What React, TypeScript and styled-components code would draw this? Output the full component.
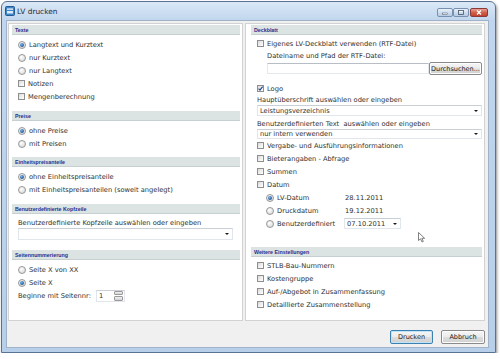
import React from "react";
import styled, { createGlobalStyle } from "styled-components";

const GlobalStyle = createGlobalStyle`
  html, body { margin: 0; padding: 0; background: #ffffff; }
  body { font-family: "DejaVu Sans", Verdana, sans-serif; color: #2f2f2f; }
`;

const Window = styled.div`
  box-sizing: border-box;
  width: 495px;
  height: 352px;
  margin: 1px 0 0 1px;
  display: flex;
  flex-direction: column;
  padding: 0 6px 4px 4px;
  border: 1px solid #5a7394;
  border-radius: 6px 6px 0 0;
  background: linear-gradient(180deg, #dae8f7 0px, #c1d6ee 18px, #b7cfe9 100%);
  box-shadow: 1px 2px 3px rgba(0, 0, 0, 0.45);
`;

const TitleBar = styled.div`
  height: 18px;
  margin: 0 -6px 0 -4px;
  padding: 0 7px 0 3px;
  display: flex;
  align-items: flex-start;
`;

const TitleIcon = styled.svg`
  width: 10px;
  height: 10px;
  margin-top: 4px;
`;

const TitleText = styled.span`
  margin: 4px 0 0 2px;
  font-family: "DejaVu Sans", sans-serif;
  font-size: 7.4px;
  line-height: 12px;
  color: #1e2b3c;
  flex: 1;
`;

const CaptionButtons = styled.div`
  display: flex;
  margin-top: 6px;
`;

const CaptionButton = styled.div<{ close?: boolean }>`
  box-sizing: border-box;
  width: ${(p) => (p.close ? 18 : 16)}px;
  height: 9px;
  margin-left: ${(p) => (p.close ? 1 : 0)}px;
  border: 1px solid ${(p) => (p.close ? "#8a3a3a" : "#7890b0")};
  border-radius: 2px;
  background: ${(p) =>
    p.close
      ? "linear-gradient(180deg, #e8a493 0%, #d0604c 50%, #c3412e 100%)"
      : "linear-gradient(180deg, #eaf1f9 0%, #cddcee 50%, #b8cbe3 100%)"};
  display: flex;
  align-items: center;
  justify-content: center;
`;

const Client = styled.div`
  flex: 1;
  box-sizing: border-box;
  display: flex;
  flex-direction: column;
  padding: 2px 3px 0 1px;
  background: #f0f0f0;
  border: 1px solid #9fb2c8;
`;

const PanelRow = styled.div`
  display: flex;
  gap: 2px;
  height: 298px;
`;

const Panel = styled.div<{ width?: number; inset: number }>`
  position: relative;
  box-sizing: border-box;
  ${(p) => (p.width ? `width: ${p.width}px;` : "flex: 1;")}
  display: flex;
  flex-direction: column;
  padding: 1px 2px 0 ${(p) => p.inset}px;
  background: #ffffff;
  border: 1px solid #d2d2d2;
`;

const Header = styled.div<{ gap?: number }>`
  box-sizing: border-box;
  height: 10px;
  margin-top: ${(p) => p.gap ?? 0}px;
  padding-left: 3px;
  background: #dce3e3;
  border-bottom: 1px solid #c7d0d0;
  font-family: "Liberation Sans", Arial, sans-serif;
  font-weight: bold;
  font-size: 5.3px;
  line-height: 10px;
  color: #1f2f8f;
  white-space: nowrap;
`;

const Rows = styled.div<{ gap?: number }>`
  display: flex;
  flex-direction: column;
  margin-top: ${(p) => p.gap ?? 3}px;
`;

const Row = styled.div<{ indent?: number; h?: number }>`
  display: flex;
  align-items: center;
  height: ${(p) => p.h ?? 13}px;
  padding-left: ${(p) => p.indent ?? 6}px;
  font-size: 6.7px;
  white-space: nowrap;
`;

const Label = styled.div<{ indent?: number; gap?: number; h?: number }>`
  height: ${(p) => p.h ?? 10}px;
  line-height: ${(p) => p.h ?? 10}px;
  margin-top: ${(p) => p.gap ?? 0}px;
  padding-left: ${(p) => p.indent ?? 6}px;
  font-size: 6.7px;
  white-space: nowrap;
`;

const RadioDot = styled.span<{ checked?: boolean }>`
  box-sizing: border-box;
  width: 8px;
  height: 8px;
  margin-right: 3px;
  border-radius: 50%;
  border: 1px solid #989898;
  background: radial-gradient(circle at 40% 35%, #ffffff 0%, #e6e6e6 55%, #cfcfcf 100%);
  display: flex;
  align-items: center;
  justify-content: center;
  flex-shrink: 0;

  &::after {
    content: "";
    display: ${(p) => (p.checked ? "block" : "none")};
    width: 4px;
    height: 4px;
    border-radius: 50%;
    background: radial-gradient(circle at 40% 35%, #7fb3e6 0%, #2d6cb0 55%, #1a3f73 100%);
  }
`;

const CheckBox = styled.span`
  box-sizing: border-box;
  width: 7px;
  height: 7px;
  margin-right: 3px;
  border: 1px solid #8f8f8f;
  background: linear-gradient(135deg, #d9d9d9 0%, #f2f2f2 60%, #ffffff 100%);
  flex-shrink: 0;
  position: relative;
`;

const Check = styled.svg`
  position: absolute;
  left: -1px;
  top: -1px;
  width: 7px;
  height: 7px;
`;

const Radio = ({ checked, children }: { checked?: boolean; children: React.ReactNode }) => (
  <>
    <RadioDot checked={checked} />
    {children}
  </>
);

const Checkbox = ({ checked, children }: { checked?: boolean; children: React.ReactNode }) => (
  <>
    <CheckBox>
      {checked && (
        <Check viewBox="0 0 7 7">
          <path d="M1.6 3.6 L3 5.1 L5.6 1.6" fill="none" stroke="#1d4688" strokeWidth="1.1" />
        </Check>
      )}
    </CheckBox>
    {children}
  </>
);

const Combo = styled.div<{ left?: number; right?: number; h?: number }>`
  box-sizing: border-box;
  height: ${(p) => p.h ?? 11}px;
  margin: 0 ${(p) => p.right ?? 0}px 0 ${(p) => p.left ?? 6}px;
  padding: 0 3px 0 2px;
  display: flex;
  align-items: center;
  justify-content: space-between;
  background: #ffffff;
  border: 1px solid #e1e6ec;
  border-top-color: #c9cfd6;
  font-size: 6.7px;
  white-space: nowrap;
`;

const Arrow = styled.span`
  width: 0;
  height: 0;
  border-left: 2px solid transparent;
  border-right: 2px solid transparent;
  border-top: 2.5px solid #1a1a1a;
`;

const InputRow = styled.div`
  display: flex;
  align-items: center;
  height: 13px;
  margin-top: 1px;
  padding-left: 16px;
`;

const TextInput = styled.div`
  box-sizing: border-box;
  width: 162px;
  height: 11px;
  background: #ffffff;
  border: 1px solid #e3e9ef;
  border-top-color: #b8bec6;
`;

const Button = styled.div<{ primary?: boolean; w: number; h: number }>`
  box-sizing: border-box;
  width: ${(p) => p.w}px;
  height: ${(p) => p.h}px;
  display: flex;
  align-items: center;
  justify-content: center;
  border: 1px solid ${(p) => (p.primary ? "#3c7fb1" : "#8a8a8a")};
  border-radius: 2px;
  background: linear-gradient(180deg, #f6f6f6 0%, #ebebeb 48%, #dddddd 52%, #d0d0d0 100%);
  box-shadow: ${(p) => (p.primary ? "inset 0 0 0 1px #bfe4f8" : "inset 0 0 0 1px #fcfcfc")};
  font-size: 6.5px;
  color: #1a1a1a;
  white-space: nowrap;
`;

const DateLabel = styled.span`
  display: flex;
  align-items: center;
  width: 79px;
`;

const DateCombo = styled.div`
  box-sizing: border-box;
  width: 57px;
  height: 11px;
  margin-left: -1px;
  padding: 0 3px 0 2px;
  display: flex;
  align-items: center;
  justify-content: space-between;
  background: #ffffff;
  border: 1px solid #e1e6ec;
  border-top-color: #c9cfd6;
`;

const Spinner = styled.div`
  box-sizing: border-box;
  width: 29px;
  height: 12px;
  margin-left: 5px;
  padding: 1px 1px 1px 2px;
  display: flex;
  align-items: center;
  justify-content: space-between;
  background: #ffffff;
  border: 1px solid #e1e6ec;
  border-top-color: #c9cfd6;
`;

const SpinButtons = styled.div`
  display: flex;
  flex-direction: column;
  gap: 1px;
`;

const SpinButton = styled.div`
  box-sizing: border-box;
  width: 9px;
  height: 4.5px;
  border: 1px solid #9a9a9a;
  border-radius: 1px;
  background: linear-gradient(180deg, #f1f1f1, #d2d2d2);
`;

const Footer = styled.div`
  display: flex;
  justify-content: flex-end;
  gap: 8px;
  padding-top: 9px;
`;

const Pointer = styled.svg`
  position: absolute;
  left: 172px;
  top: 208px;
  width: 8px;
  height: 11px;
`;

export default function App() {
  return (
    <>
      <GlobalStyle />
      <Window>
        <TitleBar>
          <TitleIcon viewBox="0 0 10 10">
            <rect x="0.5" y="0.5" width="9" height="9" rx="1" fill="#3f86c9" stroke="#245a93" />
            <rect x="2" y="2.5" width="6" height="1.2" fill="#ffffff" />
            <rect x="2" y="5" width="6" height="2.5" fill="#dcecfb" />
          </TitleIcon>
          <TitleText>LV drucken</TitleText>
          <CaptionButtons>
            <CaptionButton>
              <svg width="6" height="5" viewBox="0 0 6 5">
                <rect x="0.5" y="3" width="5" height="1.5" fill="#ffffff" stroke="#44556b" strokeWidth="0.5" />
              </svg>
            </CaptionButton>
            <CaptionButton>
              <svg width="6" height="5" viewBox="0 0 6 5">
                <rect x="0.5" y="0.5" width="5" height="4" fill="none" stroke="#44556b" strokeWidth="0.8" />
                <rect x="1.2" y="1.2" width="3.6" height="0.8" fill="#ffffff" />
              </svg>
            </CaptionButton>
            <CaptionButton close>
              <svg width="6" height="5" viewBox="0 0 6 5">
                <path d="M1 0.5 L5 4.5 M5 0.5 L1 4.5" stroke="#ffffff" strokeWidth="1.3" />
              </svg>
            </CaptionButton>
          </CaptionButtons>
        </TitleBar>

        <Client>
          <PanelRow>
            <Panel width={235} inset={3}>
              <Header>Texte</Header>
              <Rows>
                <Row><Radio checked>Langtext und Kurztext</Radio></Row>
                <Row><Radio>nur Kurztext</Radio></Row>
                <Row><Radio>nur Langtext</Radio></Row>
                <Row><Checkbox>Notizen</Checkbox></Row>
                <Row><Checkbox>Mengenberechnung</Checkbox></Row>
              </Rows>

              <Header gap={8}>Preise</Header>
              <Rows>
                <Row><Radio checked>ohne Preise</Radio></Row>
                <Row><Radio>mit Preisen</Radio></Row>
              </Rows>

              <Header gap={7}>Einheitspreisanteile</Header>
              <Rows>
                <Row><Radio checked>ohne Einheitspreisanteile</Radio></Row>
                <Row><Radio>mit Einheitspreisanteilen (soweit angelegt)</Radio></Row>
              </Rows>

              <Header gap={8}>Benutzerdefinierte Kopfzeile</Header>
              <Label gap={5} h={9}>Benutzerdefinierte Kopfzeile auswählen oder eingeben</Label>
              <Combo h={12} right={7}>
                <span />
                <Arrow />
              </Combo>

              <Header gap={10}>Seitennummerierung</Header>
              <Rows>
                <Row><Radio>Seite X von XX</Radio></Row>
                <Row><Radio checked>Seite X</Radio></Row>
                <Row>
                  Beginne mit Seitennr:
                  <Spinner>
                    <span>1</span>
                    <SpinButtons>
                      <SpinButton />
                      <SpinButton />
                    </SpinButtons>
                  </Spinner>
                </Row>
              </Rows>
            </Panel>

            <Panel inset={5}>
              <Header>Deckblatt</Header>
              <Rows gap={2}>
                <Row><Checkbox>Eigenes LV-Deckblatt verwenden (RTF-Datei)</Checkbox></Row>
              </Rows>
              <Label indent={16} gap={1}>Dateiname und Pfad der RTF-Datei:</Label>
              <InputRow>
                <TextInput />
                <Button w={53} h={13}>Durchsuchen...</Button>
              </InputRow>
              <Rows gap={7}>
                <Row><Checkbox checked>Logo</Checkbox></Row>
              </Rows>
              <Label>Hauptüberschrift auswählen oder eingeben</Label>
              <Combo>
                <span>Leistungsverzeichnis</span>
                <Arrow />
              </Combo>
              <Label gap={3}>Benutzerdefinierten Text&nbsp; auswählen oder eingeben</Label>
              <Combo h={10}>
                <span>nur intern verwenden</span>
                <Arrow />
              </Combo>
              <Rows gap={0}>
                <Row><Checkbox>Vergabe- und Ausführungsinformationen</Checkbox></Row>
                <Row><Checkbox>Bieterangaben - Abfrage</Checkbox></Row>
                <Row><Checkbox>Summen</Checkbox></Row>
                <Row><Checkbox>Datum</Checkbox></Row>
                <Row indent={15}>
                  <DateLabel><Radio checked>LV-Datum</Radio></DateLabel>
                  28.11.2011
                </Row>
                <Row indent={15}>
                  <DateLabel><Radio>Druckdatum</Radio></DateLabel>
                  19.12.2011
                </Row>
                <Row indent={15}>
                  <DateLabel><Radio>Benutzerdefiniert</Radio></DateLabel>
                  <DateCombo>
                    <span>07.10.2011</span>
                    <Arrow />
                  </DateCombo>
                </Row>
              </Rows>

              <Header gap={17}>Weitere Einstellungen</Header>
              <Rows gap={2}>
                <Row><Checkbox>STLB-Bau-Nummern</Checkbox></Row>
                <Row><Checkbox>Kostengruppe</Checkbox></Row>
                <Row><Checkbox>Auf-/Abgebot in Zusammenfassung</Checkbox></Row>
                <Row><Checkbox>Detaillierte Zusammenstellung</Checkbox></Row>
              </Rows>

              <Pointer viewBox="0 0 8 11">
                <path d="M0.5 0.5 L0.5 8.5 L2.5 6.8 L4 10 L5.3 9.4 L3.9 6.3 L6.6 6.3 Z" fill="#ffffff" stroke="#4a4a4a" strokeWidth="0.7" />
              </Pointer>
            </Panel>
          </PanelRow>

          <Footer>
            <Button primary w={43} h={14}>Drucken</Button>
            <Button w={44} h={14}>Abbruch</Button>
          </Footer>
        </Client>
      </Window>
    </>
  );
}
